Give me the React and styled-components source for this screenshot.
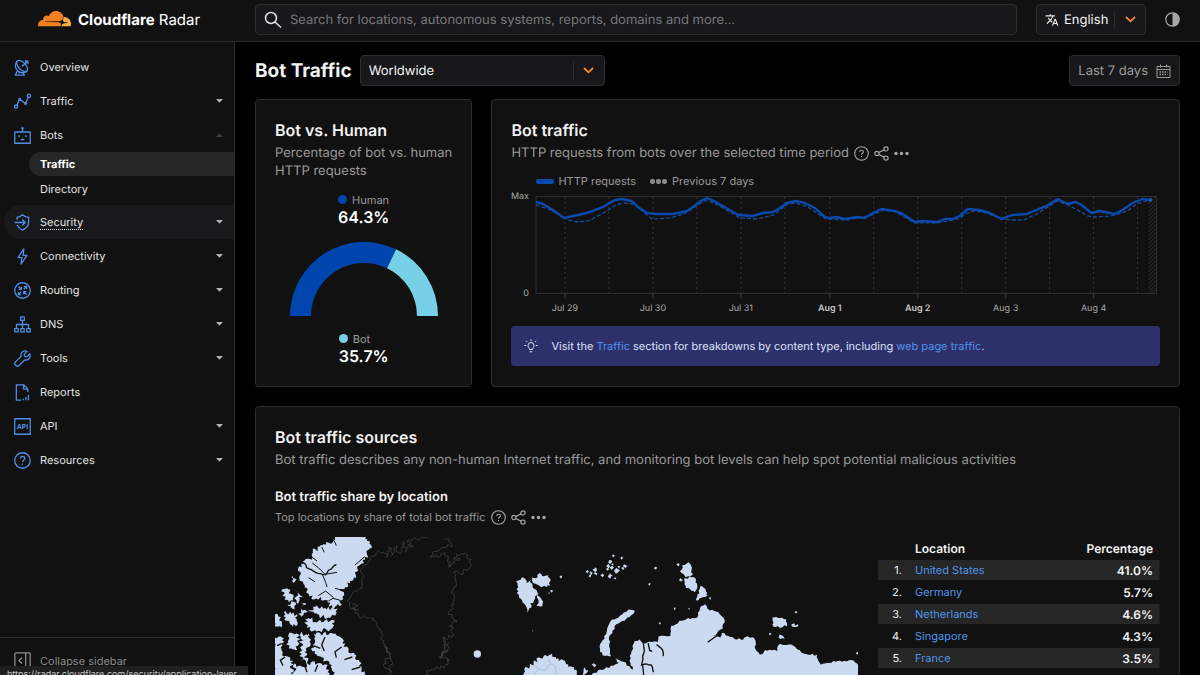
import React, { useState } from 'react';
import styled, { createGlobalStyle, css } from 'styled-components';

const GlobalStyle = createGlobalStyle`
  *, *::before, *::after {
    box-sizing: border-box;
  }

  body {
    margin: 0;
    background: #000;
    color: #f2f2f2;
    font-family: Inter, "Liberation Sans", sans-serif;
    font-size: 11px;
    text-rendering: geometricPrecision;
    -webkit-font-smoothing: antialiased;
  }

  button, input, select {
    font: inherit;
    color: inherit;
    text-rendering: inherit;
  }

  h1, h2, h3, p, ul {
    margin: 0;
    padding: 0;
  }
`;

const navItems = [
  { id: 'overview', label: 'Overview' },
  { id: 'traffic', label: 'Traffic', expandable: true },
  { id: 'bots', label: 'Bots', expandable: true, children: ['Traffic', 'Directory'] },
  { id: 'security', label: 'Security', expandable: true, hovered: true },
  { id: 'connectivity', label: 'Connectivity', expandable: true },
  { id: 'routing', label: 'Routing', expandable: true },
  { id: 'dns', label: 'DNS', expandable: true },
  { id: 'tools', label: 'Tools', expandable: true },
  { id: 'reports', label: 'Reports' },
  { id: 'api', label: 'API', expandable: true },
  { id: 'resources', label: 'Resources', expandable: true },
];

const locations = [
  { name: 'United States', share: '41.0%' },
  { name: 'Germany', share: '5.7%' },
  { name: 'Netherlands', share: '4.6%' },
  { name: 'Singapore', share: '4.3%' },
  { name: 'France', share: '3.5%' },
];

const currentSeries = '24,13 31,15 41,21 52,29 61,27 71,25 81,22 91,18 103,11 110,10 120,12 126,18 135,24 145,25 161,25 175,22 181,18 189,12 195,9 202,12 211,17 221,23 227,26 241,27 251,24 261,23 268,19 275,14 284,12 293,14 303,19 313,28 318,29 325,28 333,30 345,28 353,29 361,24 370,20 383,22 391,25 403,33 411,32 426,33 433,30 441,30 448,27 456,20 468,21 478,24 490,30 501,26 515,25 525,21 535,17 546,10 556,15 564,13 570,16 580,24 588,22 603,25 611,21 621,14 631,10 639,11';
const previousSeries = '24,16 36,20 50,27 56,31 66,33 76,32 90,25 104,16 111,14 121,15 128,20 140,30 158,29 172,25 180,20 189,14 195,11 206,16 228,29 245,30 262,26 276,15 284,14 296,18 314,30 335,31 361,26 372,21 384,23 403,34 426,34 446,30 456,24 463,22 475,24 490,30 500,31 512,31 525,25 546,12 556,16 566,21 576,27 582,28 600,27 616,22 625,15 634,12 639,12';

const days = [
  { x: 53, label: 'Jul 29' },
  { x: 141, label: 'Jul 30' },
  { x: 229, label: 'Jul 31' },
  { x: 318, label: 'Aug 1', weekend: true },
  { x: 406, label: 'Aug 2', weekend: true },
  { x: 494, label: 'Aug 3' },
  { x: 582, label: 'Aug 4' },
];

/* ---------- icons ---------- */

const navDrawings = {
  overview: (
    <>
      <ellipse cx="7.600" cy="6.600" rx="6.600" ry="3.400" transform="rotate(46 7.600 6.600)" />
      <path d="M3 1.800C.4 5 .9 9 3.600 11.200c2.600 2 6.200 2 8.700.3" />
      <path d="M7.400 7 13.400 1.400M11 .9l.2 2.600 2.800.2" />
      <path d="M3.200 11 1.200 15.200h8.600l-1.600-2.600M4.200 13.300l2-1" />
    </>
  ),
  traffic: (
    <>
      <circle cx="2" cy="12.800" r="1.500" />
      <circle cx="14" cy="2.600" r="1.500" />
      <path d="M2.700 11.400 5.400 5.600l5.400 4.600L13.400 4" />
      <circle cx="5.400" cy="5.800" r=".7" fill="currentColor" />
      <circle cx="10.800" cy="10" r=".7" fill="currentColor" />
    </>
  ),
  bots: (
    <>
      <path d="M.7 4.700h14.600v10.600H.7zM8 4.700V1.600" />
      <circle cx="8" cy="1.200" r=".6" fill="currentColor" />
      <path d="M4.800 7.800v1.600M11.200 7.800v1.600M6.400 11.800h3.200" strokeWidth="1.400" />
    </>
  ),
  security: (
    <>
      <path d="M2.800 5.400V3.200C5 3 6.600 2 8 .8c1.400 1.200 3 2.200 5.800 2.400v4.400c0 3.600-2.600 6.200-5.800 7.600-2.400-1-4.200-2.800-5-4.800" />
      <path d="M.6 8h9.800M7.800 5.200 10.600 8l-2.800 2.800" />
    </>
  ),
  connectivity: <path d="M9.200.9 3.800 9h3.600l-.8 6.100L12.200 7H8.600z" />,
  routing: (
    <>
      <circle cx="8" cy="8" r="7.300" />
      <path d="M4.200 4.200 6.900 6.900M4.400 6.900h2.500V4.400M11.800 11.800 9.100 9.100M11.600 9.100H9.100v2.500M9.200 6.800l2.700-2.700M9.400 4.100h2.500v2.500M6.800 9.200l-2.700 2.700M4.100 9.400v2.500h2.500" />
    </>
  ),
  dns: (
    <>
      <path d="M6.300.8h3.400v3.400H6.300zM.7 11.800h3.200v3.200H.7zM6.400 11.800h3.200v3.200H6.400zM12.100 11.800h3.200v3.200h-3.200z" />
      <path d="M8 4.200v7.600M2.300 11.800V8h11.400v3.800" />
    </>
  ),
  tools: (
    <path d="M12.400 1.300C9.200-.1 5.800 2.300 6.600 6L1.200 11.400c-1.500 1.800 1.500 5 3.400 3.400L10 9.400c3.600.8 6.200-2.600 4.900-5.800L12.200 6.200 9.800 5.900 9.600 3.900z" />
  ),
  reports: (
    <>
      <path d="M13 7.600V4.600L9.200.8H2.200v14.400h4.600M9 .8v4h4" />
      <path d="M8.800 15.400v-1.600M11.200 15.400v-3.200M13.600 15.400V10" />
    </>
  ),
  api: (
    <>
      <path d="M.7.7h14.600v14.600H.7z" />
      <text x="8" y="10.400" textAnchor="middle" fontSize="6.400" fontWeight="700" fill="currentColor" stroke="none">API</text>
    </>
  ),
  resources: (
    <>
      <circle cx="8" cy="8" r="7.300" />
      <path d="M6 6.200c.1-2.700 4.100-2.600 4.100 0C10.100 7.700 8 7.700 8 9.500M8 10.900v1.200" />
    </>
  ),
  collapse: (
    <>
      <path d="M1.800.8h12.400a1 1 0 0 1 1 1v12.400a1 1 0 0 1-1 1H1.800a1 1 0 0 1-1-1V1.800a1 1 0 0 1 1-1zM11 .8v14.400" />
      <path d="M7.600 5.200 4.600 8l3 2.800" />
    </>
  ),
};

const LineIcon = ({ name, size = 17 }) => (
  <svg width={size} height={size} viewBox="0 0 16 16" fill="none" stroke="currentColor" strokeWidth="1.200" strokeLinejoin="round" aria-hidden="true">
    {navDrawings[name]}
  </svg>
);

const Caret = ({ up }) => (
  <svg width="7" height="4" viewBox="0 0 7 4" fill="currentColor" aria-hidden="true">
    <path d={up ? 'M0 4 3.500.2 7 4z' : 'M0 0h7L3.500 3.800z'} />
  </svg>
);

const Chevron = () => (
  <svg width="11" height="7" viewBox="0 0 11 7" fill="none" stroke="#f38a2e" strokeWidth="1.800" aria-hidden="true">
    <path d="m1 1 4.500 4.300L10 1" />
  </svg>
);

const CloudLogo = () => (
  <svg width="33" height="16" viewBox="0 0 33 16" aria-hidden="true">
    <path
      fill="#f38020"
      d="M22.500 15.200 22.800 14.200C23 13.300 22.900 12.500 22.500 12 22.100 11.500 21.500 11.200 20.700 11.200L7.100 11C6.900 10.700 7.100 10.400 7.400 10.400L21 10.200C22.600 10.100 24.400 8.800 25 7.200L25.500 5.800C24.600 2.300 21.600 0 18 0 14.700 0 11.900 2.100 10.900 5.100 10.200 4.600 9.300 4.300 8.400 4.400 6.700 4.600 5.400 5.900 5.200 7.600 5.200 8 5.200 8.400 5.300 8.800 2.400 8.900 .1 11.200 .1 14.100L.2 15.100C.2 15.200 .3 15.300 .5 15.300L22.400 15.300z"
    />
    <path
      fill="#faae40"
      d="M26.400 6 26 6.100 25.700 6.300 25.100 8.200C24.900 9.100 25 9.900 25.400 10.400 25.800 10.900 26.400 11.200 27.200 11.200L29.800 11.400C30 11.700 29.800 12 29.500 12L26.800 12.200C25.100 12.300 23.800 13.400 23.400 15.300L32.600 15.300C32.900 14.300 33 13.500 33 12.900 33 9 30.100 6 26.400 6z"
    />
  </svg>
);

const ChartActions = () => (
  <Actions>
    <IconButton type="button" aria-label="Help">
      <svg width="15" height="15" viewBox="0 0 15 15" fill="none" stroke="currentColor" strokeWidth="1.100">
        <circle cx="7.500" cy="7.500" r="6.800" />
        <path d="M5.700 5.900c.1-2.300 3.700-2.200 3.700 0 0 1.300-1.900 1.300-1.900 2.800M7.500 10v1.100" />
      </svg>
    </IconButton>
    <IconButton type="button" aria-label="Share">
      <svg width="15" height="15" viewBox="0 0 15 15" fill="none" stroke="currentColor" strokeWidth="1.200">
        <circle cx="2.900" cy="7.500" r="2.100" />
        <circle cx="12" cy="2.900" r="2.100" />
        <circle cx="12" cy="12.100" r="2.100" />
        <path d="M4.800 6.500 10.100 3.900M4.800 8.500l5.300 2.600" />
      </svg>
    </IconButton>
    <IconButton type="button" aria-label="More options">
      <svg width="15" height="5" viewBox="0 0 15 5" fill="currentColor">
        <circle cx="2" cy="2.500" r="1.700" />
        <circle cx="7.500" cy="2.500" r="1.700" />
        <circle cx="13" cy="2.500" r="1.700" />
      </svg>
    </IconButton>
  </Actions>
);

/* ---------- charts ---------- */

const ShareGauge = () => {
  const split = Math.PI * (1 - 0.643);
  const at = (r) => `${74 + r * Math.cos(split)} ${74 - r * Math.sin(split)}`;

  return (
    <GaugeSvg viewBox="0 0 148 74" role="img" aria-label="Human 64.3%, Bot 35.7%">
      <path fill="#0045ad" d={`M0 74A74 74 0 0 1 ${at(74)}L${at(53)}A53 53 0 0 0 21 74z`} />
      <path fill="#76d0e8" d={`M${at(74)}A74 74 0 0 1 148 74H127A53 53 0 0 0 ${at(53)}z`} />
    </GaugeSvg>
  );
};

const TrafficChart = () => (
  <ChartSvg viewBox="-1 0 649 128" role="img" aria-label="HTTP requests from bots">
    <defs>
      <pattern id="pending" width="4" height="4" patternUnits="userSpaceOnUse">
        <path d="M0 4 4 0" stroke="#333" />
      </pattern>
    </defs>
    {days.map(({ x }) => (
      <g key={x} stroke="#383838">
        <path d={`M${x} 8V104M${x + 44} 8V104`} strokeDasharray="2 3" />
        <path d={`M${x} 104V110`} />
      </g>
    ))}
    <path d="M24 7.500H645V104.500H24z" fill="none" stroke="#303030" />
    <rect x="637" y="8" width="8" height="96" fill="url(#pending)" />
    <polyline points={previousSeries} fill="none" stroke="#174c9f" strokeWidth="1.300" strokeDasharray="4 2" />
    <polyline points={currentSeries} fill="none" stroke="#0b49ad" strokeWidth="2.400" strokeLinejoin="round" />
    <circle cx="639" cy="11" r="1.700" fill="#1b5cc7" />
    <AxisText x="17" y="10" textAnchor="end">Max</AxisText>
    <AxisText x="17" y="107" textAnchor="end">0</AxisText>
    {days.map(({ x, label, weekend }) => (
      <AxisText key={label} x={x} y="122" textAnchor="middle" $bold={weekend}>{label}</AxisText>
    ))}
  </ChartSvg>
);

// Breaks every edge of an outline into short steps and pushes them in and out, which gives a ragged coast
const coast = (outline, amp = 5, step = 7, close = true) => {
  const points = outline.split(' ').map((pair) => pair.split(',').map(Number));
  const count = close ? points.length : points.length - 1;
  let seed = points[0][0] + points.length * 31;
  const random = () => {
    seed = (seed * 9301 + 49297) % 233280;
    return seed / 233280 - 0.5;
  };
  const out = [];
  for (let i = 0; i < count; i += 1) {
    const [x1, y1] = points[i];
    const [x2, y2] = points[(i + 1) % points.length];
    const length = Math.hypot(x2 - x1, y2 - y1) || 1;
    const steps = Math.max(1, Math.round(length / step));
    for (let s = 0; s < steps; s += 1) {
      const t = s / steps;
      const push = random() * amp * 2;
      out.push(`${(x1 + (x2 - x1) * t + ((y1 - y2) / length) * push).toFixed(1)} ${(y1 + (y2 - y1) * t + ((x2 - x1) / length) * push).toFixed(1)}`);
    }
  }
  return `M${out.join('L')}${close ? 'z' : ''}`;
};

const arcticCanada = [
  '195,-4 262,-4 280,10 287,30 275,58 258,78 245,110 225,138 202,156 204,180 194,206 172,212 150,190 132,180 118,190 100,168 86,148 75,132 74,90 92,75 110,60 106,45 140,30 165,14',
  '115,212 185,216 190,230 170,240 130,238 100,225',
  '96,244 120,250 175,250 176,275 140,280 105,278 92,262',
  '20,148 40,158 55,175 48,192 28,180',
  '66,160 80,178 72,196 60,188',
  '-4,236 16,240 20,268 -4,270',
  '26,228 64,232 66,262 48,268 36,250',
  '40,200 56,198 58,212 44,214',
  '78,218 94,224 90,240 74,236',
  '50,124 60,122 60,132 52,132',
  '78,198 88,198 88,210 80,210',
  '116,294 150,290 190,296 205,318 225,345 250,370 258,395 272,414 290,600 180,600 175,414 165,380 135,362 114,335',
  '-4,296 20,300 26,350 50,372 52,414 50,600 -4,600',
  '38,294 70,292 72,325 56,342 40,322',
  '80,290 104,290 104,318 88,345 96,375 80,372 76,330',
  '58,380 85,392 112,376 128,382 155,385 165,414 165,600 60,600',
];

const arcticIslands = [
  '725,134 740,122 752,128 754,144 766,128 770,148 788,164 780,184 768,200 760,226 748,200 738,186 728,168',
  '770,119 784,124 795,106 806,120 822,114 824,144 798,152 775,138',
  '788,168 796,186 806,194 802,208 788,206 790,188',
  '1222,86 1240,76 1252,98 1251,118 1226,118 1218,104',
  '1228,124 1255,120 1267,140 1260,164 1235,152',
  '1275,148 1296,162 1298,178 1263,190 1270,168',
  '1493,244 1510,241 1533,247 1535,264 1515,269 1495,269',
  '1546,259 1572,267 1568,272 1550,268',
  '1513,294 1528,302 1515,306',
  '926,394 940,400 930,414 926,430',
];

const mainlands = [
  '1060,219 1078,220 1074,232 1048,250 1024,262 1014,282 1005,300 1001,328 1008,358 990,357 974,344 976,322 990,298 996,268 1012,250 1036,238',
  '947,414 975,399 1015,387 1030,379 1020,364 1045,374 1075,397 1065,379 1067,349 1080,314 1093,309 1105,319 1120,314 1145,314 1150,299 1185,297 1190,269 1220,249 1265,241 1275,214 1290,201 1305,219 1335,229 1348,249 1343,274 1315,299 1335,301 1340,289 1380,304 1405,309 1410,299 1440,304 1440,329 1455,354 1470,341 1505,341 1515,319 1555,327 1585,349 1625,354 1637,384 1675,374 1735,371 1749,384 1749,600 947,600',
];

const islets = [
  [937, 104, 4], [948, 108, 6], [960, 98, 7], [945, 117, 5], [962, 110, 6], [1005, 74, 6], [1000, 88, 7],
  [1010, 92, 6], [1025, 101, 9], [1005, 117, 8], [1050, 88, 7], [1044, 94, 5], [1015, 57, 5], [1040, 63, 4],
  [982, 116, 5], [997, 97, 5], [1020, 124, 4], [1032, 90, 4], [1013, 82, 4], [1142, 93, 5], [1123, 141, 4],
  [1210, 83, 5], [1217, 129, 6], [1199, 215, 4], [1242, 216, 3], [1155, 259, 3], [1563, 226, 4], [1485, 291, 3],
  [773, 281, 2], [858, 120, 4], [830, 162, 4], [822, 168, 3], [957, 384, 6], [1747, 349, 5], [1306, 184, 4],
];

const WorldMap = () => (
  <MapSvg viewBox="0 0 1749 900" role="img" aria-label="Bot traffic share by location">
    <g fill="#cbdaf0">
      {arcticCanada.map((outline) => <path key={outline} d={coast(outline, 7, 5)} />)}
      {arcticIslands.map((outline) => <path key={outline} d={coast(outline, 4, 6)} />)}
      {mainlands.map((outline) => <path key={outline} d={coast(outline, 3, 7)} />)}
      <path d={coast('747,414 755,394 780,374 797,359 825,351 845,364 875,380 905,404 920,600 720,600', 6, 5)} />
      {islets.map(([x, y, r]) => (
        <path key={`${x}-${y}`} d={coast(`${x - r},${y} ${x},${y - r} ${x + r},${y - 1} ${x + 1},${y + r}`, 2, 5)} />
      ))}
      <circle cx="607" cy="351" r="11" />
    </g>
    <g fill="none" stroke="#111" strokeWidth="4">
      <path d={coast('84,74 100,96 115,104 150,112 168,96 190,78', 3, 7, false)} />
      <path d="M150 112 130 92 112 78M150 112l36-6M142 112l10 24 4 14M130 176l22-14 24 20M268 60 240 84M100 122l20 12M204 160l-24-6M196 190l-22-6-14 8M110 60l16 12M140 30l8 16M178 12l6 14" strokeWidth="3" />
      <path d="M150 300l-10 24 8 18M116 326l20 8M200 330l-20 14 4 18M232 360l-24 8M256 390l-26 8M20 320l-14 6M30 360l-14 10 8 16M90 388l6 18M128 384l-8 20" />
      <path d={coast('1103,308 1107,350 1100,382 1128,384 1135,414', 3, 8, false)} />
      <path d={coast('1103,382 1106,440', 2, 8, false)} />
      <path d={coast('1120,318 1124,340 1140,346', 2, 8, false)} />
      <path d={coast('1145,322 1165,340 1163,366', 2, 8, false)} />
      <path d="M1298 316 1342 284" />
    </g>
    <path d="M775 414l14-18 22 4 16-20 14 8 4 26M790 396l-8-10M827 380l-6-12" fill="none" stroke="#9db0ca" strokeWidth="2" />
    <g fill="none" stroke="#4a4a4a" strokeWidth="2">
      <path d={coast('287,64 275,79 260,99 265,129 260,154 225,174 220,189 230,214 255,239 295,244 315,279 330,329 345,359 350,380 340,414 338,460', 5, 6, false)} />
      <path d={coast('287,64 310,44 335,54 340,62 345,29 352,56 362,30 375,49 385,14 392,46 400,20 415,30 395,9 440,4 465,1', 5, 7, false)} />
      <path d={coast('510,1 530,24 495,34 465,59 515,49 525,92 538,66 555,69 545,54 580,54 587,79 565,109 540,104 544,149 532,160 540,189 524,229 545,254 528,262 535,289 505,309 520,334 490,364 525,369 505,389 460,401 440,440', 6, 5, false)} />
      <path d={coast('505,300 512,340 498,362 514,330 520,310', 5, 5, false)} />
      <path d={coast('230,200 250,206 232,214 256,222', 3, 5, false)} />
      <path d={coast('328,330 348,352 326,380 350,414', 6, 5, false)} />
    </g>
  </MapSvg>
);

/* ---------- page ---------- */

const App = () => {
  const [query, setQuery] = useState('');

  return (
    <Page>
      <GlobalStyle />
      <Header>
        <Brand href="#home">
          <CloudLogo />
          <BrandName><strong>Cloudflare</strong> Radar</BrandName>
        </Brand>
        <HeaderTools>
          <SearchBox>
            <svg width="18" height="18" viewBox="0 0 18 18" fill="none" stroke="#e4e4e4" strokeWidth="1.500" aria-hidden="true">
              <circle cx="7" cy="7" r="5.500" />
              <path d="m11 11 6 5.500" />
            </svg>
            <input
              type="search"
              aria-label="Search"
              placeholder="Search for locations, autonomous systems, reports, domains and more..."
              value={query}
              onChange={(e) => setQuery(e.target.value)}
            />
          </SearchBox>
          <SelectBox $width="110px">
            <svg width="14" height="14" viewBox="0 0 24 24" fill="#e8e8e8" aria-hidden="true">
              <path d="m12.870 15.070-2.540-2.510.03-.03A17.520 17.520 0 0 0 14.070 6H17V4h-7V2H8v2H1v2h11.170C11.500 7.920 10.440 9.750 9 11.350 8.070 10.320 7.300 9.190 6.690 8h-2c.73 1.630 1.730 3.170 2.980 4.560l-5.090 5.020L4 19l5-5 3.110 3.110zM18.500 10h-2L12 22h2l1.120-3h4.750L21 22h2zm-2.620 7 1.620-4.330L19.120 17z" />
            </svg>
            <select aria-label="Language" defaultValue="English">
              <option>English</option>
            </select>
            <SelectArrow><Chevron /></SelectArrow>
          </SelectBox>
          <IconButton type="button" aria-label="Theme">
            <svg width="15" height="15" viewBox="0 0 15 15" aria-hidden="true">
              <circle cx="7.500" cy="7.500" r="6.700" fill="none" stroke="currentColor" strokeWidth="1.200" />
              <path d="M7.500.5a7 7 0 0 1 0 14z" fill="currentColor" />
            </svg>
          </IconButton>
        </HeaderTools>
      </Header>

      <Body>
        <Sidebar>
          <NavList>
            {navItems.map((item) => (
              <li key={item.id}>
                <NavItem
                  as={item.expandable ? 'button' : 'a'}
                  href={item.expandable ? undefined : `#${item.id}`}
                  type={item.expandable ? 'button' : undefined}
                  aria-expanded={item.expandable ? Boolean(item.children) : undefined}
                  $hovered={item.hovered}
                >
                  <LineIcon name={item.id} />
                  <NavLabel $underlined={item.hovered}>{item.label}</NavLabel>
                  {item.expandable && <NavCaret $open={item.children}><Caret up={item.children} /></NavCaret>}
                </NavItem>
                {item.children && (
                  <SubList>
                    {item.children.map((child) => (
                      <li key={child}>
                        <SubItem href={`#bots-${child.toLowerCase()}`} $active={child === 'Traffic'}>{child}</SubItem>
                      </li>
                    ))}
                  </SubList>
                )}
              </li>
            ))}
          </NavList>
          <CollapseButton type="button">
            <LineIcon name="collapse" />
            Collapse sidebar
          </CollapseButton>
        </Sidebar>

        <Main>
          <TitleRow>
            <h1>Bot Traffic</h1>
            <SelectBox $width="245px">
              <select aria-label="Location" defaultValue="Worldwide">
                <option>Worldwide</option>
              </select>
              <SelectArrow><Chevron /></SelectArrow>
            </SelectBox>
            <DateButton type="button">
              Last 7 days
              <svg width="15" height="14" viewBox="0 0 15 14" fill="none" stroke="currentColor" aria-hidden="true">
                <path d="M1 2.500h13v11H1zM1 5.500h13M4.500.5v3M10.500.5v3" />
                <path d="M3.500 8h8M3.500 10.500h8" strokeWidth="1.400" strokeDasharray="1.500 1" />
              </svg>
            </DateButton>
          </TitleRow>

          <CardRow>
            <Card>
              <CardTitle>Bot vs. Human</CardTitle>
              <CardText>Percentage of bot vs. human HTTP requests</CardText>
              <Gauge>
                <GaugeValue $color="#0045ad">
                  <span>Human</span>
                  <strong>64.3%</strong>
                </GaugeValue>
                <ShareGauge />
                <GaugeValue $color="#76d0e8">
                  <span>Bot</span>
                  <strong>35.7%</strong>
                </GaugeValue>
              </Gauge>
            </Card>

            <Card>
              <CardTitle>Bot traffic</CardTitle>
              <CardText>
                HTTP requests from bots over the selected time period
                <ChartActions />
              </CardText>
              <Legend>
                <LegendItem>
                  <svg width="18" height="5" aria-hidden="true"><rect width="18" height="5" rx="2" fill="#0b49ad" /></svg>
                  HTTP requests
                </LegendItem>
                <LegendItem>
                  <svg width="18" height="5" aria-hidden="true" fill="#8a8a8a">
                    <rect width="5" height="5" rx="2" />
                    <rect x="6" width="5" height="5" rx="2" />
                    <rect x="12" width="5" height="5" rx="2" />
                  </svg>
                  Previous 7 days
                </LegendItem>
              </Legend>
              <TrafficChart />
              <Notice>
                <svg width="14" height="14" viewBox="0 0 14 14" fill="none" stroke="currentColor" aria-hidden="true">
                  <path d="M5.500 10.500C5.500 9 4 8.500 4 6.500a3 3 0 0 1 6 0c0 2-1.500 2.500-1.500 4zM5.700 12.800h2.600M7 2V.3M3.200 3 2 1.800M10.800 3 12 1.800M2.200 6.500H.4M11.800 6.500h1.800" />
                </svg>
                <p>
                  Visit the <TextLink href="#traffic">Traffic</TextLink> section for breakdowns by content type, including{' '}
                  <TextLink href="#web">web page traffic</TextLink>.
                </p>
              </Notice>
            </Card>
          </CardRow>

          <Card>
            <CardTitle>Bot traffic sources</CardTitle>
            <CardText>Bot traffic describes any non-human Internet traffic, and monitoring bot levels can help spot potential malicious activities</CardText>
            <SectionTitle>Bot traffic share by location</SectionTitle>
            <SectionText>
              Top locations by share of total bot traffic
              <ChartActions />
            </SectionText>
            <Split>
              <WorldMap />
              <LocationTable>
                <thead>
                  <tr>
                    <th aria-label="Rank" />
                    <th>Location</th>
                    <th>Percentage</th>
                  </tr>
                </thead>
                <tbody>
                  {locations.map(({ name, share }, index) => (
                    <tr key={name}>
                      <td>{index + 1}.</td>
                      <td><TextLink href={`#${name}`}>{name}</TextLink></td>
                      <td>{share}</td>
                    </tr>
                  ))}
                </tbody>
              </LocationTable>
            </Split>
          </Card>
        </Main>
      </Body>
      <StatusBar>https://radar.cloudflare.com/security/application-layer</StatusBar>
    </Page>
  );
};

const Page = styled.div`
  display: flex;
  flex-direction: column;
  height: 100vh;
  overflow: hidden;
`;

const Header = styled.header`
  display: flex;
  flex-shrink: 0;
  height: 42px;
  background: #111;
  border-bottom: 1px solid #2b2b2b;
`;

const Brand = styled.a`
  display: flex;
  align-items: center;
  gap: 7px;
  width: 235px;
  padding-left: 38px;
  padding-bottom: 4px;
  color: #fff;
  text-decoration: none;
`;

const BrandName = styled.span`
  font-size: 15px;
  line-height: 20px;
  padding-top: 2px;

  strong {
    font-weight: 700;
  }
`;

const HeaderTools = styled.div`
  display: flex;
  flex: 1;
  align-items: center;
  gap: 19px;
  padding: 0 20px 2px;
`;

const field = css`
  display: flex;
  align-items: center;
  height: 31px;
  padding: 0 8px;
  background: #18181a;
  border: 1px solid #2d2d2f;
  border-radius: 4px;
`;

const SearchBox = styled.div`
  ${field}
  flex: 1;
  gap: 8px;

  input {
    flex: 1;
    padding: 0;
    background: none;
    border: 0;
    outline: 0;
    font-size: 13px;
  }

  input::placeholder {
    color: #77777a;
    opacity: 1;
  }
`;

const SelectBox = styled.div`
  ${field}
  width: ${({ $width }) => $width};
  padding-right: 0;

  select {
    flex: 1;
    min-width: 0;
    padding: 0;
    background: none;
    border: 0;
    outline: 0;
    appearance: none;
    font-size: 13px;
  }

  svg + select {
    margin-left: 5px;
  }
`;

const SelectArrow = styled.span`
  display: flex;
  align-items: center;
  justify-content: center;
  width: 31px;
  height: 18px;
  border-left: 1px solid #2d2d2f;
  pointer-events: none;
`;

const IconButton = styled.button`
  display: flex;
  align-items: center;
  padding: 0;
  background: none;
  border: 0;
  color: #a6a6a6;
  cursor: pointer;
`;

const Body = styled.div`
  display: flex;
  flex: 1;
  min-height: 0;
`;

const Sidebar = styled.nav`
  display: flex;
  flex-direction: column;
  justify-content: space-between;
  flex-shrink: 0;
  width: 235px;
  background: #111;
  border-right: 1px solid #2b2b2b;
`;

const NavList = styled.ul`
  padding: 8px 0 0 4px;
  list-style: none;
`;

const NavItem = styled.a`
  display: flex;
  align-items: center;
  gap: 9px;
  width: 100%;
  height: 34px;
  padding: 0 11px 0 10px;
  background: ${({ $hovered }) => ($hovered ? '#19191b' : 'none')};
  border: 0;
  border-radius: 17px 0 0 17px;
  color: #4f8fe8;
  text-align: left;
  text-decoration: none;
  cursor: pointer;
`;

const NavLabel = styled.span`
  flex: 1;
  color: #e2e2e2;
  line-height: 16px;
  text-decoration: ${({ $underlined }) => ($underlined ? 'underline dotted' : 'none')};
  text-underline-offset: 3px;
`;

const NavCaret = styled.span`
  display: flex;
  color: ${({ $open }) => ($open ? '#3c3c3c' : '#b4b4b4')};
`;

const SubList = styled.ul`
  display: flex;
  flex-direction: column;
  gap: 1px;
  padding: 0 0 4px 25px;
  list-style: none;
`;

const SubItem = styled.a`
  display: block;
  padding-left: 11px;
  background: ${({ $active }) => ($active ? '#262626' : 'none')};
  border-radius: 12px 0 0 12px;
  color: ${({ $active }) => ($active ? '#fff' : '#e2e2e2')};
  font-weight: ${({ $active }) => ($active ? 700 : 400)};
  line-height: 24px;
  text-decoration: none;
`;

const CollapseButton = styled.button`
  display: flex;
  align-items: center;
  gap: 9px;
  height: 38px;
  padding: 8px 14px 0;
  background: none;
  border: 0;
  border-top: 1px solid #2b2b2b;
  color: #8c8c8c;
  text-align: left;
`;

const Main = styled.main`
  flex: 1;
  min-width: 0;
  padding: 13px 20px 0;
  overflow: hidden;
`;

const TitleRow = styled.div`
  display: flex;
  align-items: center;
  gap: 8px;
  margin-bottom: 13px;

  h1 {
    font-size: 19px;
    line-height: 24px;
    font-weight: 700;
  }
`;

const DateButton = styled.button`
  ${field}
  gap: 8px;
  margin-left: auto;
  color: #9b9b9b;
  font-size: 13px;
`;

const CardRow = styled.div`
  display: grid;
  grid-template-columns: minmax(0, 6fr) minmax(0, 19fr);
  gap: 19px;
  margin-bottom: 19px;
`;

const Card = styled.section`
  padding: 20px 19px;
  background: #111;
  border: 1px solid #2b2b2b;
  border-radius: 4px;
`;

const CardTitle = styled.h2`
  font-size: 16px;
  line-height: 20px;
  font-weight: 600;
`;

const CardText = styled.div`
  display: flex;
  align-items: center;
  gap: 5px;
  margin-top: 4px;
  color: #999;
  font-size: 13px;
  line-height: 18px;
`;

const Actions = styled.span`
  display: flex;
  align-items: center;
  gap: 5px;
`;

const Gauge = styled.div`
  display: flex;
  flex-direction: column;
  align-items: center;
  padding-top: 13px;
`;

const GaugeValue = styled.div`
  color: #999;
  line-height: 14px;

  span::before {
    content: '';
    display: inline-block;
    width: 9px;
    height: 9px;
    margin-right: 5px;
    border-radius: 50%;
    background: ${({ $color }) => $color};
  }

  strong {
    display: block;
    color: #fff;
    font-size: 16px;
    line-height: 20px;
    font-weight: 600;
  }
`;

const GaugeSvg = styled.svg`
  width: 148px;
  margin: 15px 0 16px;
`;

const Legend = styled.div`
  display: flex;
  gap: 14px;
  margin-top: 12px;
  padding-left: 25px;
`;

const LegendItem = styled.span`
  display: flex;
  align-items: center;
  gap: 4px;
  color: #999;
  line-height: 15px;
`;

const ChartSvg = styled.svg`
  display: block;
  width: 100%;
`;

const AxisText = styled.text`
  fill: ${({ $bold }) => ($bold ? '#c4c4c4' : '#a8a8a8')};
  font-size: 9px;
  font-weight: ${({ $bold }) => ($bold ? 600 : 400)};
`;

const Notice = styled.div`
  display: flex;
  align-items: center;
  gap: 13px;
  height: 40px;
  margin-top: 9px;
  padding: 0 13px;
  background: #2e306c;
  border-radius: 4px;
  color: #dfe0f5;
`;

const TextLink = styled.a`
  color: #5093e8;
  text-decoration: none;
`;

const SectionTitle = styled.h3`
  margin-top: 19px;
  font-size: 13px;
  line-height: 18px;
  font-weight: 600;
`;

const SectionText = styled(CardText)`
  margin-top: 2px;
  font-size: 11px;
`;

const Split = styled.div`
  display: grid;
  grid-template-columns: minmax(0, 1fr) 282px;
  align-items: start;
  gap: 20px;
  margin-top: 11px;
`;

const MapSvg = styled.svg`
  display: block;
  width: 100%;
`;

const LocationTable = styled.table`
  width: 100%;
  border-collapse: collapse;

  tr {
    height: 22px;
  }

  tbody tr:nth-child(odd) {
    background: linear-gradient(#262626, #262626) 0 1px / 100% 20px no-repeat;
  }

  th, td {
    padding: 0 7px;
    text-align: left;
    font-weight: 400;
  }

  th, td:last-child {
    font-size: 12px;
    font-weight: 600;
  }

  th:first-child, td:first-child {
    width: 30px;
    padding-right: 6px;
    text-align: right;
  }

  th:last-child, td:last-child {
    text-align: right;
  }
`;

const StatusBar = styled.div`
  position: fixed;
  bottom: -8px;
  left: 0;
  padding: 0 11px 0 7px;
  background: #1f1f1f;
  color: #c9c9c9;
  font-size: 9px;
  line-height: 17px;
`;

export default App;
